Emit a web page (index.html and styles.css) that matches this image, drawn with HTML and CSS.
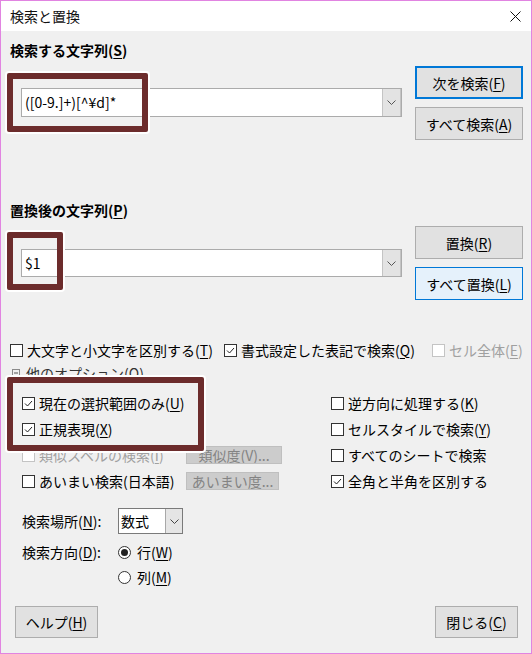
FILE: index.html
```html
<!DOCTYPE html>
<html lang="ja">
<head>
    <meta charset="UTF-8">
    <title>検索と置換</title>
    <link rel="stylesheet" href="styles.css">
</head>
<body>
<div class="window">
    <div class="titlebar">
        <span class="title">検索と置換</span>
        <svg class="close-x" width="11" height="11" viewBox="0 0 11 11"><path d="M0.5 0.5 L10.5 10.5 M10.5 0.5 L0.5 10.5" stroke="#111" stroke-width="1" fill="none"/></svg>
    </div>

    <div class="content">
        <div class="section-label">検索する文字列(<u>S</u>)</div>
        <div class="field-row">
            <div class="combo combo-search">
                <span class="combo-text">([0-9.]+)[^¥d]*</span>
                <span class="combo-btn"><svg width="9" height="5" viewBox="0 0 9 5"><path d="M0.5 0.5 L4.5 4.5 L8.5 0.5" stroke="#555" fill="none"/></svg></span>
            </div>
            <div class="btn-col">
                <button class="btn btn-default">次を検索(<u>F</u>)</button>
                <button class="btn">すべて検索(<u>A</u>)</button>
            </div>
        </div>

        <div class="section-label label-replace">置換後の文字列(<u>P</u>)</div>
        <div class="field-row">
            <div class="combo combo-replace">
                <span class="combo-text">$1</span>
                <span class="combo-btn"><svg width="9" height="5" viewBox="0 0 9 5"><path d="M0.5 0.5 L4.5 4.5 L8.5 0.5" stroke="#555" fill="none"/></svg></span>
            </div>
            <div class="btn-col">
                <button class="btn">置換(<u>R</u>)</button>
                <button class="btn btn-focus">すべて置換(<u>L</u>)</button>
            </div>
        </div>

        <div class="opt-row">
            <label class="check"><span class="cb"></span><span>大文字と小文字を区別する(<u>T</u>)</span></label>
            <label class="check"><span class="cb"><svg viewBox="0 0 11 11"><path d="M2 5.5 L4.5 8 L9 3" stroke="#222" fill="none"/></svg></span><span>書式設定した表記で検索(<u>Q</u>)</span></label>
            <label class="check disabled"><span class="cb"></span><span>セル全体(<u>E</u>)</span></label>
        </div>

        <div class="more-row">
            <svg class="expander" width="8" height="8" viewBox="0 0 8 8"><rect x="0.5" y="0.5" width="7" height="7" fill="none" stroke="#8a8a8a"/><path d="M2 4 H6" stroke="#555"/></svg>
            <span>他のオプション(<u>O</u>)</span>
        </div>

        <div class="opts-grid">
            <label class="check"><span class="cb"><svg viewBox="0 0 11 11"><path d="M2 5.5 L4.5 8 L9 3" stroke="#222" fill="none"/></svg></span><span>現在の選択範囲のみ(<u>U</u>)</span></label>
            <label class="check"><span class="cb"></span><span>逆方向に処理する(<u>K</u>)</span></label>

            <label class="check"><span class="cb"><svg viewBox="0 0 11 11"><path d="M2 5.5 L4.5 8 L9 3" stroke="#222" fill="none"/></svg></span><span>正規表現(<u>X</u>)</span></label>
            <label class="check"><span class="cb"></span><span>セルスタイルで検索(<u>Y</u>)</span></label>

            <div class="opt-with-btn">
                <label class="check disabled"><span class="cb"></span><span>類似スペルの検索(<u>I</u>)</span></label>
                <button class="small-btn">類似度(<u>V</u>)...</button>
            </div>
            <label class="check"><span class="cb"></span><span>すべてのシートで検索</span></label>

            <div class="opt-with-btn">
                <label class="check"><span class="cb"></span><span>あいまい検索(日本語)</span></label>
                <button class="small-btn btn-narrow">あいまい度...</button>
            </div>
            <label class="check"><span class="cb"><svg viewBox="0 0 11 11"><path d="M2 5.5 L4.5 8 L9 3" stroke="#222" fill="none"/></svg></span><span>全角と半角を区別する</span></label>
        </div>

        <div class="where-grid">
            <span class="where-label">検索場所(<u>N</u>):</span>
            <div class="select">
                <span class="select-text">数式</span>
                <span class="select-btn"><svg width="9" height="5" viewBox="0 0 9 5"><path d="M0.5 0.5 L4.5 4.5 L8.5 0.5" stroke="#444" fill="none"/></svg></span>
            </div>

            <span class="where-label row-dir">検索方向(<u>D</u>):</span>
            <label class="radio row-dir"><span class="rb checked"></span><span>行(<u>W</u>)</span></label>

            <span class="row-col"></span>
            <label class="radio row-col"><span class="rb"></span><span>列(<u>M</u>)</span></label>
        </div>

        <div class="bottom-row">
            <button class="btn btn-bottom">ヘルプ(<u>H</u>)</button>
            <button class="btn btn-bottom">閉じる(<u>C</u>)</button>
        </div>
    </div>

    <!-- 注釈の枠 -->
    <div class="mark mark-search"></div>
    <div class="mark mark-replace"></div>
    <div class="mark mark-options"></div>
</div>
</body>
</html>
```

FILE: styles.css
```css
body {
    margin: 0;
    padding: 0;
    font-family: "Noto Sans CJK JP", "Noto Sans", sans-serif;
    font-size: 14px;
    color: #000;
    background-color: #f0f0f0;
}
u {
    text-decoration: underline;
    text-underline-offset: 2px;
}
.window {
    position: relative;
    box-sizing: border-box;
    width: 532px;
    height: 654px;
    border: 1px solid #e184e1;
    background-color: #f0f0f0;
    overflow: hidden;
}
.titlebar {
    height: 30px;
    background-color: #fff;
    display: flex;
    align-items: center;
    justify-content: space-between;
    padding: 0 10px 0 9px;
}
.title {
    line-height: 30px;
    color: #111;
}
.content {
    padding: 0 8px 0 9px;
}
.section-label {
    margin-top: 9px;
    line-height: 20px;
    font-weight: bold;
}
.label-replace {
    margin-top: 60px;
}
.field-row {
    display: flex;
    align-items: flex-start;
    gap: 13px;
    margin-top: 6px;
}

/* コンボボックス */
.combo {
    flex: 1;
    display: flex;
    box-sizing: border-box;
    margin-left: 11px;
    border: 1px solid #ababab;
    background-color: #fff;
}
.combo-search {
    margin-top: 22px;
    height: 29px;
}
.combo-replace {
    margin-top: 23px;
    height: 28px;
}
.combo-text {
    flex: 1;
    padding-left: 3px;
    line-height: 27px;
    white-space: nowrap;
}
.combo-btn {
    width: 17px;
    display: flex;
    align-items: center;
    justify-content: center;
    background-color: #e3e3e3;
    border-left: 1px solid #c4c4c4;
    border-right: 1px solid #c4c4c4;
}
.btn-col {
    width: 108px;
    display: flex;
    flex-direction: column;
    gap: 8px;
}
.btn {
    box-sizing: border-box;
    height: 33px;
    margin: 0;
    padding: 0;
    font: inherit;
    color: #000;
    background-color: #e1e1e1;
    border: 1px solid #adadad;
}
.btn-default {
    border: 2px solid #0078d7;
}
.btn-focus {
    background-color: #e5f1fb;
    border: 1px solid #0078d7;
}

/* オプション */
.opt-row {
    margin-top: 40px;
    display: grid;
    grid-template-columns: 214px 208px auto;
    line-height: 20px;
}
.check {
    display: flex;
    align-items: center;
    gap: 4px;
    white-space: nowrap;
}
.cb {
    box-sizing: border-box;
    width: 13px;
    height: 13px;
    border: 1px solid #333;
    background-color: #fff;
    display: flex;
}
.cb svg {
    width: 11px;
    height: 11px;
}
.check.disabled {
    color: #a0a0a0;
}
.check.disabled .cb {
    border-color: #c4c4c4;
}
.more-row {
    margin-top: 3px;
    line-height: 20px;
    display: flex;
    align-items: center;
    gap: 6px;
    padding-left: 2px;
    color: #333;
}
.opts-grid {
    margin-top: 7px;
    padding-left: 12px;
    display: grid;
    grid-template-columns: 309px auto;
    grid-auto-rows: 26px;
    align-items: center;
}
.opt-with-btn {
    display: flex;
    align-items: center;
}
.opt-with-btn .check {
    width: 164px;
}
.small-btn {
    box-sizing: border-box;
    width: 96px;
    height: 18px;
    margin: 0;
    padding: 0;
    font: inherit;
    line-height: 16px;
    color: #838383;
    background-color: #cccccc;
    border: 1px solid #bfbfbf;
    white-space: nowrap;
    overflow: hidden;
}
.btn-narrow {
    width: 93px;
}

/* 検索場所・方向 */
.where-grid {
    margin-top: 14px;
    padding-left: 12px;
    display: grid;
    grid-template-columns: 96px auto;
    align-items: center;
}
.where-label {
    line-height: 26px;
}
.select {
    box-sizing: border-box;
    width: 65px;
    height: 26px;
    display: flex;
    border: 1px solid #7a7a7a;
    background-color: #fff;
}
.select-text {
    flex: 1;
    padding-left: 2px;
    line-height: 24px;
}
.select-btn {
    width: 16px;
    display: flex;
    align-items: center;
    justify-content: center;
    background-color: #e5e5e5;
    border-left: 1px solid #a8a8a8;
}
.row-dir {
    margin-top: 5px;
    line-height: 26px;
}
.row-col {
    line-height: 24px;
}
.radio {
    display: flex;
    align-items: center;
    gap: 6px;
}
.rb {
    box-sizing: border-box;
    width: 13px;
    height: 13px;
    border: 1px solid #333;
    border-radius: 50%;
    background-color: #fff;
    display: flex;
    align-items: center;
    justify-content: center;
}
.rb.checked::after {
    content: "";
    width: 7px;
    height: 7px;
    border-radius: 50%;
    background-color: #222;
}
.bottom-row {
    margin-top: 17px;
    padding: 0 5px;
    display: flex;
    justify-content: space-between;
}
.btn-bottom {
    width: 83px;
    height: 32px;
}

/* 注釈の枠（スクリーンショットの上に重なる） */
.mark {
    position: absolute;
    box-sizing: border-box;
    border: 6px solid #6c2c2c;
    box-shadow: 0 0 0 2px #fff;
    border-radius: 2px;
}
.mark-search {
    left: 6px;
    top: 72px;
    width: 141px;
    height: 59px;
}
.mark-replace {
    left: 6px;
    top: 231px;
    width: 56px;
    height: 58px;
}
.mark-options {
    left: 6px;
    top: 376px;
    width: 197px;
    height: 74px;
}
```
